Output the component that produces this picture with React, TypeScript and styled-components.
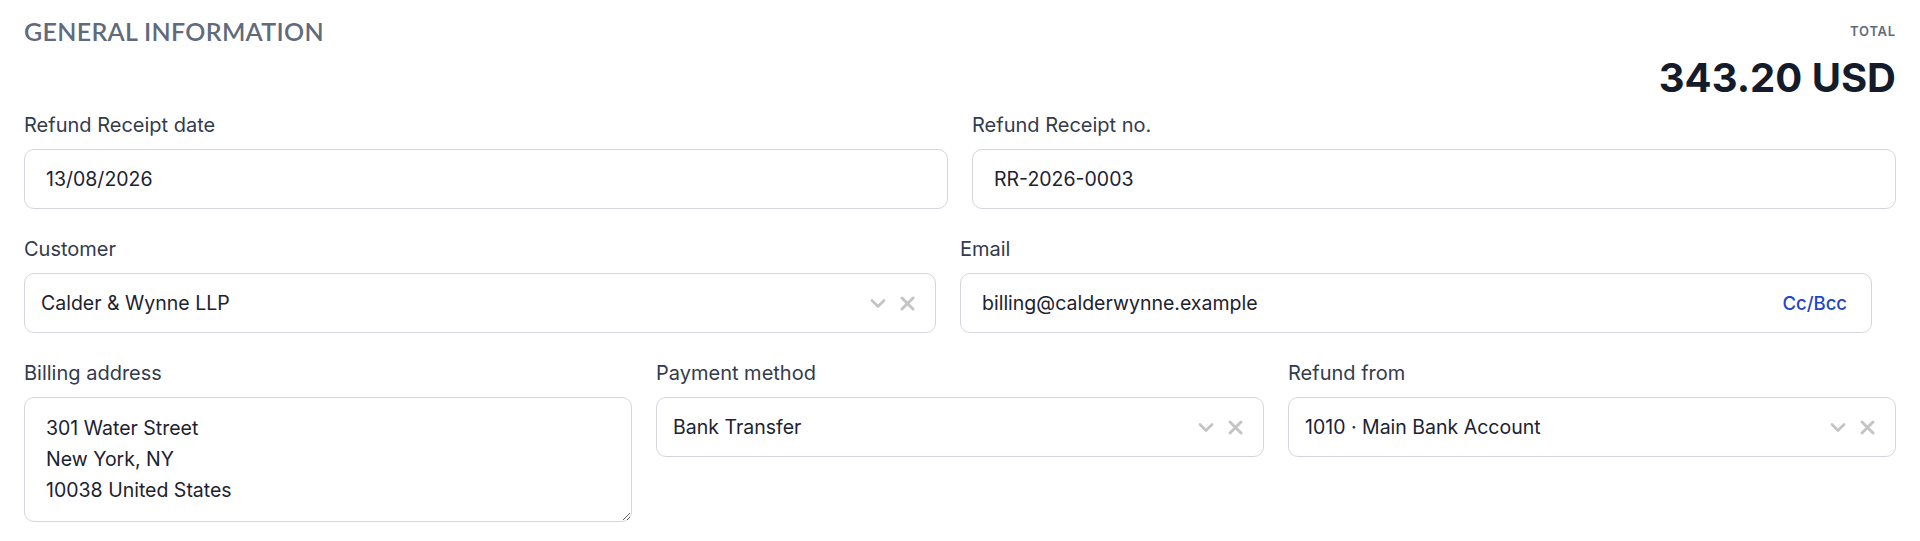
import React from "react";
import styled, { createGlobalStyle } from "styled-components";

const GlobalStyle = createGlobalStyle`
  * { box-sizing: border-box; }
  body {
    margin: 0;
    background: #ffffff;
    font-family: Inter, "Liberation Sans", sans-serif;
    color: #1f2937;
  }
`;

const Page = styled.div`
  padding: 14px 24px 0 24px;
`;

const Header = styled.header`
  display: flex;
  justify-content: space-between;
  align-items: flex-start;
  margin-bottom: 9px;
`;

const Title = styled.h2`
  margin: 0;
  font-family: Lato, Inter, sans-serif;
  font-size: 25px;
  line-height: 34px;
  font-weight: 600;
  letter-spacing: 0.012em;
  text-transform: uppercase;
  color: #5f6b7d;
`;

const TotalBox = styled.div`
  display: flex;
  flex-direction: column;
  align-items: flex-end;
  padding-top: 8px;
`;

const TotalLabel = styled.span`
  font-size: 13px;
  line-height: 18px;
  font-weight: 600;
  letter-spacing: 0.06em;
  color: #5f6b7d;
`;

const TotalAmount = styled.span`
  margin-top: 14px;
  font-size: 40px;
  line-height: 48px;
  font-weight: 700;
  color: #141b2b;
`;

const Row = styled.div<{ $cols: number; $inset?: number }>`
  display: grid;
  grid-template-columns: repeat(${(p) => p.$cols}, 1fr);
  column-gap: 24px;
  padding-right: ${(p) => p.$inset ?? 0}px;
  margin-bottom: 26px;

  &:last-child {
    margin-bottom: 0;
  }
`;

const Field = styled.div`
  display: flex;
  flex-direction: column;
  min-width: 0;
`;

const Label = styled.label`
  font-size: 20px;
  line-height: 28px;
  font-weight: 400;
  color: #333b4c;
  margin-bottom: 10px;
`;

const Box = styled.div`
  display: flex;
  align-items: center;
  height: 60px;
  border: 1px solid #d3d6dc;
  border-radius: 10px;
  background: #fff;
`;

const TextInput = styled.input`
  flex: 1;
  min-width: 0;
  height: 100%;
  border: none;
  outline: none;
  background: transparent;
  padding: 0 21px;
  font-family: inherit;
  font-size: 19.5px;
  color: #1c2230;
`;

const SelectValue = styled.span`
  flex: 1;
  padding-left: 16px;
  font-size: 19.5px;
  color: #1c2230;
`;

const Indicators = styled.div`
  display: flex;
  align-items: center;
  gap: 14px;
  padding-right: 20px;
`;

const CcLink = styled.a`
  padding-right: 24px;
  font-size: 18.5px;
  font-weight: 500;
  color: #1f45c8;
  text-decoration: none;
  cursor: pointer;
`;

const TextArea = styled.textarea`
  height: 125px;
  border: 1px solid #d3d6dc;
  border-radius: 10px;
  padding: 15px 21px;
  font-family: inherit;
  font-size: 19.5px;
  line-height: 31px;
  color: #1c2230;
  outline: none;
  resize: vertical;
`;

function Chevron() {
  return (
    <svg width="16" height="11" viewBox="0 0 16 11" fill="none">
      <path d="M2 2.5 L8 8.5 L14 2.5" stroke="#c4c4c4" strokeWidth="2.7" strokeLinecap="round" strokeLinejoin="round" />
    </svg>
  );
}

function Cross() {
  return (
    <svg width="15" height="15" viewBox="0 0 15 15" fill="none">
      <path d="M2 2 L13 13 M13 2 L2 13" stroke="#c4c4c4" strokeWidth="2.9" strokeLinecap="round" />
    </svg>
  );
}

function SelectField({ label, value }: { label: string; value: string }) {
  return (
    <Field>
      <Label>{label}</Label>
      <Box>
        <SelectValue>{value}</SelectValue>
        <Indicators>
          <Chevron />
          <Cross />
        </Indicators>
      </Box>
    </Field>
  );
}

function InputField({ label, value }: { label: string; value: string }) {
  return (
    <Field>
      <Label>{label}</Label>
      <Box>
        <TextInput defaultValue={value} />
      </Box>
    </Field>
  );
}

export default function App() {
  return (
    <>
      <GlobalStyle />
      <Page>
        <Header>
          <Title>General Information</Title>
          <TotalBox>
            <TotalLabel>TOTAL</TotalLabel>
            <TotalAmount>343.20 USD</TotalAmount>
          </TotalBox>
        </Header>

        <Row $cols={2}>
          <InputField label="Refund Receipt date" value="13/08/2026" />
          <InputField label="Refund Receipt no." value="RR-2026-0003" />
        </Row>

        <Row $cols={2} $inset={24}>
          <SelectField label="Customer" value="Calder & Wynne LLP" />
          <Field>
            <Label>Email</Label>
            <Box>
              <TextInput defaultValue="billing@calderwynne.example" />
              <CcLink>Cc/Bcc</CcLink>
            </Box>
          </Field>
        </Row>

        <Row $cols={3}>
          <Field>
            <Label>Billing address</Label>
            <TextArea defaultValue={"301 Water Street\nNew York, NY\n10038 United States"} />
          </Field>
          <SelectField label="Payment method" value="Bank Transfer" />
          <SelectField label="Refund from" value="1010 · Main Bank Account" />
        </Row>
      </Page>
    </>
  );
}
